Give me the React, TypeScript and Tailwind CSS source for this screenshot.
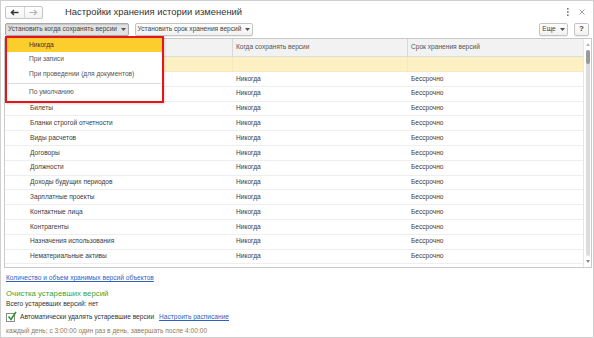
import type { ReactNode } from "react";

const font = { fontFamily: '"Liberation Sans", Arial, sans-serif' };

interface Row {
  name: string;
  when: string;
  term: string;
}

// first two names sit under the open menu
const rows: Row[] = [
  { name: "", when: "Никогда", term: "Бессрочно" },
  { name: "", when: "Никогда", term: "Бессрочно" },
  { name: "Билеты", when: "Никогда", term: "Бессрочно" },
  { name: "Бланки строгой отчетности", when: "Никогда", term: "Бессрочно" },
  { name: "Виды расчетов", when: "Никогда", term: "Бессрочно" },
  { name: "Договоры", when: "Никогда", term: "Бессрочно" },
  { name: "Должности", when: "Никогда", term: "Бессрочно" },
  { name: "Доходы будущих периодов", when: "Никогда", term: "Бессрочно" },
  { name: "Зарплатные проекты", when: "Никогда", term: "Бессрочно" },
  { name: "Контактные лица", when: "Никогда", term: "Бессрочно" },
  { name: "Контрагенты", when: "Никогда", term: "Бессрочно" },
  { name: "Назначения использования", when: "Никогда", term: "Бессрочно" },
  { name: "Нематериальные активы", when: "Никогда", term: "Бессрочно" },
];

const Caret = () => (
  <svg width="5" height="3" viewBox="0 0 5 3" className="ml-[4px] shrink-0">
    <path d="M0 0h5L2.5 3z" fill="#555" />
  </svg>
);

const ToolButton = ({ children, pressed, className = "" }: { children: ReactNode; pressed?: boolean; className?: string }) => (
  <div
    className={
      "flex h-[13px] items-center justify-center whitespace-nowrap rounded-[2px] border text-[6.6px] leading-none text-[#444] " +
      (pressed
        ? "border-[#a9a9a9] bg-[#e2e2e2] shadow-[inset_0_1px_1px_rgba(0,0,0,0.12)] "
        : "border-[#c4c4c4] bg-gradient-to-b from-white to-[#f1f1f1] shadow-[0_1px_0_rgba(0,0,0,0.06)] ") +
      className
    }
  >
    {children}
  </div>
);

const App = () => {
  return (
    <div style={font} className="relative h-[338px] w-[594px] overflow-hidden border border-[#cfcfcf] bg-white text-[#3c3c3c]">
      {/* Title bar */}
      <div className="flex h-[21px] items-center pl-[4px] pr-[4px] pt-[1px]">
        <div className="flex h-[13px] w-[38px] items-stretch rounded-[2px] border border-[#c6c6c6] bg-gradient-to-b from-white to-[#f3f3f3]">
          <div className="flex flex-1 items-center justify-center border-r border-[#d6d6d6]">
            <svg width="9" height="7" viewBox="0 0 9 7">
              <path d="M8.5 3.5H1.5M4 1L1.3 3.5 4 6" stroke="#333" strokeWidth="1.3" fill="none" />
            </svg>
          </div>
          <div className="flex flex-1 items-center justify-center">
            <svg width="9" height="7" viewBox="0 0 9 7">
              <path d="M0.5 3.5H7.5M5 1L7.7 3.5 5 6" stroke="#b5b5b5" strokeWidth="1.1" fill="none" />
            </svg>
          </div>
        </div>
        <div className="ml-[22px] text-[9.4px] text-[#333]">Настройки хранения истории изменений</div>
        <div className="ml-auto flex items-center gap-[10px] pr-[4px]">
          <svg width="2" height="8" viewBox="0 0 2 8">
            <rect x="0" y="0" width="1.6" height="1.6" fill="#777" />
            <rect x="0" y="3.2" width="1.6" height="1.6" fill="#777" />
            <rect x="0" y="6.4" width="1.6" height="1.6" fill="#777" />
          </svg>
          <svg width="6" height="6" viewBox="0 0 6 6">
            <path d="M0.5 0.5l5 5M5.5 0.5l-5 5" stroke="#999" strokeWidth="0.9" />
          </svg>
        </div>
      </div>

      {/* Toolbar */}
      <div className="flex h-[14px] items-center pl-[4px] pr-[4px]">
        <ToolButton pressed className="w-[124px]">
          Установить когда сохранять версии
          <Caret />
        </ToolButton>
        <ToolButton className="ml-[6px] w-[118px]">
          Установить срок хранения версий
          <Caret />
        </ToolButton>
        <ToolButton className="ml-auto w-[29px]">
          Еще
          <Caret />
        </ToolButton>
        <ToolButton className="ml-[6px] w-[15px] text-[8px] font-bold text-[#333]">?</ToolButton>
      </div>

      {/* Table */}
      <div className="ml-[3px] mt-[2px] flex h-[230px] w-[588px] border border-[#c9c9c9]">
        <div className="flex-1 overflow-hidden text-[6.6px] leading-none">
          <div className="grid h-[18px] grid-cols-[228px_175px_1fr] border-b border-[#dcdcdc] bg-[#f2f2f2] text-[#555]">
            <div className="border-r border-[#d8d8d8]" />
            <div className="flex items-center border-r border-[#d8d8d8] pl-[3px]">Когда сохранять версии</div>
            <div className="flex items-center pl-[3px]">Срок хранения версий</div>
          </div>
          <div className="grid h-[15px] grid-cols-[228px_175px_1fr] border-b border-[#f3e9c8] bg-[#fdf1c4]">
            <div className="border-r border-[#f6e7b6]" />
            <div className="border-r border-[#f6e7b6]" />
            <div />
          </div>
          {rows.map((r, i) => (
            <div key={i} className="grid h-[14.8px] grid-cols-[228px_175px_1fr] items-center border-b border-[#eeeeee]">
              <div className="pl-[25px]">{r.name}</div>
              <div className="pl-[3px]">{r.when}</div>
              <div className="pl-[3px]">{r.term}</div>
            </div>
          ))}
          <div className="h-[10px]" />
        </div>
        {/* Scrollbar */}
        <div className="flex w-[8px] flex-col items-center border-l border-[#e6e6e6] bg-white py-[4px]">
          <svg width="4" height="3" viewBox="0 0 4 3">
            <path d="M0 3h4L2 0z" fill="#bbb" />
          </svg>
          <div className="mt-[4px] flex w-[4px] flex-1 flex-col rounded-[2px] bg-[#dcdcdc]">
            <div className="h-[14px] rounded-[2px] bg-[#9a9a9a]" />
          </div>
          <svg width="4" height="3" viewBox="0 0 4 3" className="mt-[4px]">
            <path d="M0 0h4L2 3z" fill="#888" />
          </svg>
        </div>
      </div>

      {/* Bottom section */}
      <div className="pl-[5px] text-[6.6px] leading-none">
        <div className="mt-[7px] text-[#2f5fc0] underline">Количество и объем хранимых версий объектов</div>
        <div className="mt-[8px] text-[7.8px] text-[#3aa33a]">Очистка устаревших версий</div>
        <div className="mt-[4px] text-[#333]">Всего устаревших версий: нет</div>
        <div className="mt-[5px] flex items-center">
          <div className="relative h-[9px] w-[9px] border border-[#8c8c8c] bg-white">
            <svg width="10" height="10" viewBox="0 0 10 10" className="absolute left-[0px] top-[-3px]">
              <path d="M1.5 5.5L4 8.5 9 1" stroke="#2e9a2e" strokeWidth="1.6" fill="none" />
            </svg>
          </div>
          <span className="ml-[5px] text-[#333]">Автоматически удалять устаревшие версии</span>
          <span className="ml-[5px] text-[#2f5fc0] underline">Настроить расписание</span>
        </div>
        <div className="mt-[6px] text-[#8f7d5c]">каждый день; с 3:00:00 один раз в день, завершать после 4:00:00</div>
      </div>

      {/* Dropdown menu */}
      <div className="absolute left-[4px] top-[35px] flex h-[67px] w-[159px] flex-col border-2 border-[#e8141c] bg-white text-[6.6px] leading-none text-[#555] shadow-[1px_1px_2px_rgba(0,0,0,0.15)]">
        <div className="flex h-[14px] items-center bg-[#fbcd2d] pl-[22px] text-[#333]">Никогда</div>
        <div className="flex h-[15px] items-center pl-[22px]">При записи</div>
        <div className="flex h-[15px] items-center pl-[22px]">При проведении (для документов)</div>
        <div className="mx-[1px] mt-[1px] border-t border-[#dedede]" />
        <div className="flex h-[16px] items-center pl-[22px]">По умолчанию</div>
      </div>
    </div>
  );
};

export default App;
